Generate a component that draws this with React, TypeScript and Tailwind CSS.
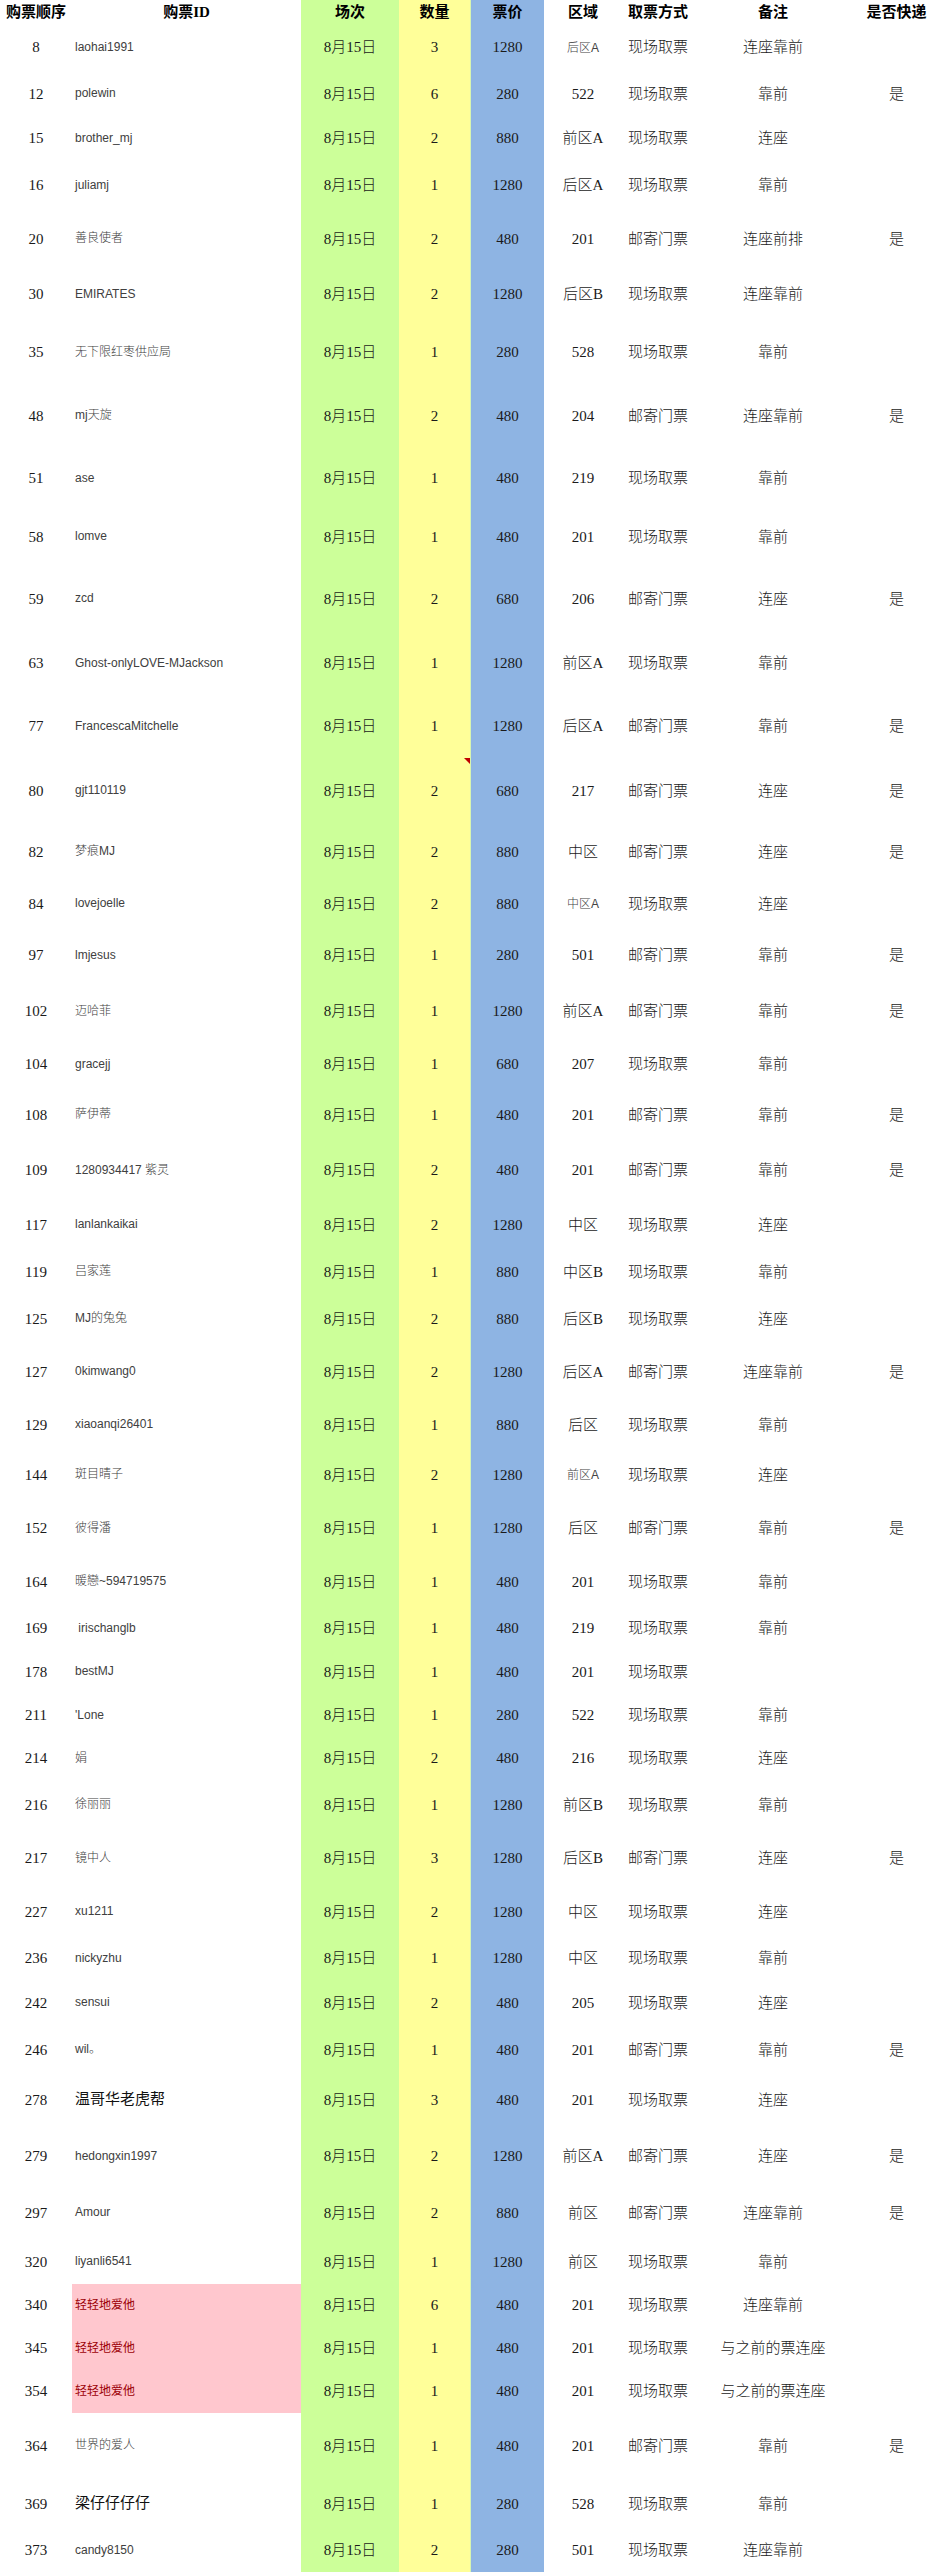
import React from "react";

type Row = {
  no: number;
  id: string;
  qty: number;
  price: number;
  zone: string;
  pick: string;
  note: string;
  exp?: boolean;
  h: number;
  idKind?: "big" | "pink";
  zoneSmall?: boolean;
  flag?: boolean;
};

const S = "现场取票";
const M = "邮寄门票";

const rows: Row[] = [
  { no: 8, id: "laohai1991", qty: 3, price: 1280, zone: "后区A", pick: S, note: "连座靠前", h: 47, zoneSmall: true },
  { no: 12, id: "polewin", qty: 6, price: 280, zone: "522", pick: S, note: "靠前", exp: true, h: 46 },
  { no: 15, id: "brother_mj", qty: 2, price: 880, zone: "前区A", pick: S, note: "连座", h: 43 },
  { no: 16, id: "juliamj", qty: 1, price: 1280, zone: "后区A", pick: S, note: "靠前", h: 51 },
  { no: 20, id: "善良使者", qty: 2, price: 480, zone: "201", pick: M, note: "连座前排", exp: true, h: 56 },
  { no: 30, id: "EMIRATES", qty: 2, price: 1280, zone: "后区B", pick: S, note: "连座靠前", h: 55 },
  { no: 35, id: "无下限红枣供应局", qty: 1, price: 280, zone: "528", pick: S, note: "靠前", h: 61 },
  { no: 48, id: "mj天旋", qty: 2, price: 480, zone: "204", pick: M, note: "连座靠前", exp: true, h: 66 },
  { no: 51, id: "ase", qty: 1, price: 480, zone: "219", pick: S, note: "靠前", h: 59 },
  { no: 58, id: "lomve", qty: 1, price: 480, zone: "201", pick: S, note: "靠前", h: 58 },
  { no: 59, id: "zcd", qty: 2, price: 680, zone: "206", pick: M, note: "连座", exp: true, h: 66 },
  { no: 63, id: "Ghost-onlyLOVE-MJackson", qty: 1, price: 1280, zone: "前区A", pick: S, note: "靠前", h: 63 },
  { no: 77, id: "FrancescaMitchelle", qty: 1, price: 1280, zone: "后区A", pick: M, note: "靠前", exp: true, h: 63 },
  { no: 80, id: "gjt110119", qty: 2, price: 680, zone: "217", pick: M, note: "连座", exp: true, h: 66, flag: true },
  { no: 82, id: "梦痕MJ", qty: 2, price: 880, zone: "中区", pick: M, note: "连座", exp: true, h: 56 },
  { no: 84, id: "lovejoelle", qty: 2, price: 880, zone: "中区A", pick: S, note: "连座", h: 48, zoneSmall: true },
  { no: 97, id: "lmjesus", qty: 1, price: 280, zone: "501", pick: M, note: "靠前", exp: true, h: 55 },
  { no: 102, id: "迈哈菲", qty: 1, price: 1280, zone: "前区A", pick: M, note: "靠前", exp: true, h: 57 },
  { no: 104, id: "gracejj", qty: 1, price: 680, zone: "207", pick: S, note: "靠前", h: 49 },
  { no: 108, id: "萨伊蒂", qty: 1, price: 480, zone: "201", pick: M, note: "靠前", exp: true, h: 52 },
  { no: 109, id: "1280934417 紫灵", qty: 2, price: 480, zone: "201", pick: M, note: "靠前", exp: true, h: 59 },
  { no: 117, id: "lanlankaikai", qty: 2, price: 1280, zone: "中区", pick: S, note: "连座", h: 50 },
  { no: 119, id: "吕家莲", qty: 1, price: 880, zone: "中区B", pick: S, note: "靠前", h: 44 },
  { no: 125, id: "MJ的兔兔", qty: 2, price: 880, zone: "后区B", pick: S, note: "连座", h: 50 },
  { no: 127, id: "0kimwang0", qty: 2, price: 1280, zone: "后区A", pick: M, note: "连座靠前", exp: true, h: 56 },
  { no: 129, id: "xiaoanqi26401", qty: 1, price: 880, zone: "后区", pick: S, note: "靠前", h: 50 },
  { no: 144, id: "斑目晴子", qty: 2, price: 1280, zone: "前区A", pick: S, note: "连座", h: 50, zoneSmall: true },
  { no: 152, id: "彼得潘", qty: 1, price: 1280, zone: "后区", pick: M, note: "靠前", exp: true, h: 57 },
  { no: 164, id: "暖戀~594719575", qty: 1, price: 480, zone: "201", pick: S, note: "靠前", h: 50 },
  { no: 169, id: " irischanglb", qty: 1, price: 480, zone: "219", pick: S, note: "靠前", h: 43 },
  { no: 178, id: "bestMJ", qty: 1, price: 480, zone: "201", pick: S, note: "", h: 44 },
  { no: 211, id: "'Lone", qty: 1, price: 280, zone: "522", pick: S, note: "靠前", h: 43 },
  { no: 214, id: "娟", qty: 2, price: 480, zone: "216", pick: S, note: "连座", h: 43 },
  { no: 216, id: "徐丽丽", qty: 1, price: 1280, zone: "前区B", pick: S, note: "靠前", h: 50 },
  { no: 217, id: "镜中人", qty: 3, price: 1280, zone: "后区B", pick: M, note: "连座", exp: true, h: 57 },
  { no: 227, id: "xu1211", qty: 2, price: 1280, zone: "中区", pick: S, note: "连座", h: 50 },
  { no: 236, id: "nickyzhu", qty: 1, price: 1280, zone: "中区", pick: S, note: "靠前", h: 43 },
  { no: 242, id: "sensui", qty: 2, price: 480, zone: "205", pick: S, note: "连座", h: 46 },
  { no: 246, id: "wil。", qty: 1, price: 480, zone: "201", pick: M, note: "靠前", exp: true, h: 48 },
  { no: 278, id: "温哥华老虎帮", qty: 3, price: 480, zone: "201", pick: S, note: "连座", h: 53, idKind: "big" },
  { no: 279, id: "hedongxin1997", qty: 2, price: 1280, zone: "前区A", pick: M, note: "连座", exp: true, h: 59 },
  { no: 297, id: "Amour", qty: 2, price: 880, zone: "前区", pick: M, note: "连座靠前", exp: true, h: 54 },
  { no: 320, id: "liyanli6541", qty: 1, price: 1280, zone: "前区", pick: S, note: "靠前", h: 44 },
  { no: 340, id: "轻轻地爱他", qty: 6, price: 480, zone: "201", pick: S, note: "连座靠前", h: 43, idKind: "pink" },
  { no: 345, id: "轻轻地爱他", qty: 1, price: 480, zone: "201", pick: S, note: "与之前的票连座", h: 43, idKind: "pink" },
  { no: 354, id: "轻轻地爱他", qty: 1, price: 480, zone: "201", pick: S, note: "与之前的票连座", h: 43, idKind: "pink" },
  { no: 364, id: "世界的爱人", qty: 1, price: 480, zone: "201", pick: M, note: "靠前", exp: true, h: 66 },
  { no: 369, id: "梁仔仔仔仔", qty: 1, price: 280, zone: "528", pick: S, note: "靠前", h: 50, idKind: "big" },
  { no: 373, id: "candy8150", qty: 2, price: 280, zone: "501", pick: S, note: "连座靠前", h: 43 },
];

const grid =
  "grid grid-cols-[72px_229px_98px_71px_74px_78px_72px_158px_89px]";
const serif = "font-['Liberation_Serif','Noto_Sans_CJK_SC',serif]";
const sans = "font-['Liberation_Sans','Noto_Sans_CJK_SC',sans-serif]";

function Header() {
  const cell = "flex items-center justify-center";
  return (
    <div className={`${grid} h-[24px] ${serif} text-[15px] font-bold text-black`}>
      <div className={cell}>购票顺序</div>
      <div className={cell}>购票ID</div>
      <div className={`${cell} bg-[#ccff99]`}>场次</div>
      <div className={`${cell} bg-[#ffff99]`}>数量</div>
      <div className={`${cell} bg-[#8eb4e3] border-l border-[#d8f5b0]`}>票价</div>
      <div className={cell}>区域</div>
      <div className={cell}>取票方式</div>
      <div className={cell}>备注</div>
      <div className={cell}>是否快递</div>
    </div>
  );
}

function TicketRow({ r }: { r: Row }) {
  const cell = "flex items-center justify-center";
  const idClass =
    r.idKind === "big"
      ? `${sans} text-[15px] font-normal text-[#111]`
      : r.idKind === "pink"
        ? `${sans} text-[12px] font-normal text-[#9c0006] bg-[#ffc7ce]`
        : `${sans} text-[12px] text-[#404040]`;
  return (
    <div
      className={`${grid} ${serif} text-[15px] font-light text-[#1a1a1a]`}
      style={{ height: r.h }}
    >
      <div className={cell}>{r.no}</div>
      <div className={`flex items-center pl-[3px] whitespace-pre ${idClass}`}>
        <span className="-mt-[2px]">{r.id}</span>
      </div>
      <div className={`${cell} bg-[#ccff99]`}>8月15日</div>
      <div className={`${cell} bg-[#ffff99] relative`}>
        {r.qty}
        {r.flag && (
          <svg
            className="absolute top-0 right-0"
            width="6"
            height="6"
            viewBox="0 0 6 6"
          >
            <polygon points="0,0 6,0 6,6" fill="#c00000" />
          </svg>
        )}
      </div>
      <div className={`${cell} bg-[#8eb4e3] border-l border-[#d8f5b0]`}>
        {r.price}
      </div>
      <div
        className={
          r.zoneSmall
            ? `${cell} ${sans} text-[12px] text-[#444]`
            : cell
        }
      >
        {r.zone}
      </div>
      <div className={cell}>{r.pick}</div>
      <div className={cell}>{r.note}</div>
      <div className={cell}>{r.exp ? "是" : ""}</div>
    </div>
  );
}

export default function App() {
  return (
    <div className="w-[941px] h-[2572px] bg-white overflow-hidden">
      <Header />
      {rows.map((r, i) => (
        <TicketRow key={`${r.no}-${i}`} r={r} />
      ))}
    </div>
  );
}
